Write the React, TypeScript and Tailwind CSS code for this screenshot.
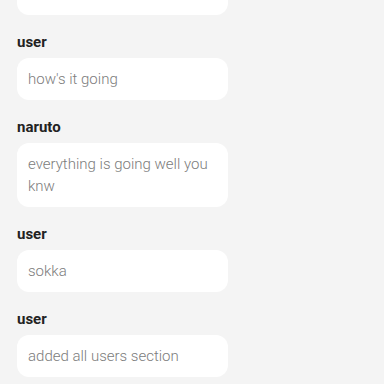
const messages = [
  { sender: 'user', text: '' },
  { sender: 'user', text: "how's it going" },
  { sender: 'naruto', text: 'everything is going well you knw' },
  { sender: 'user', text: 'sokka' },
  { sender: 'user', text: 'added all users section' },
]

export default function App() {
  return (
    <div className="h-screen w-full overflow-hidden bg-[#f4f4f4] font-['Roboto',sans-serif]">
      <div className="-mt-[27px] flex flex-col px-[17px]">
        {messages.map((m, i) => (
          <div key={i} className="flex flex-col">
            {i > 0 && (
              <div className="mt-[17px] mb-[6px] text-[15px] leading-[20px] font-bold text-[#222]">
                {m.sender}
              </div>
            )}
            <div className="min-h-[42px] w-[211px] rounded-[12px] bg-white px-[11px] py-[10px] text-[15px] leading-[22px] font-light text-[#7c7c7c]">
              {m.text}
            </div>
          </div>
        ))}
      </div>
    </div>
  )
}
